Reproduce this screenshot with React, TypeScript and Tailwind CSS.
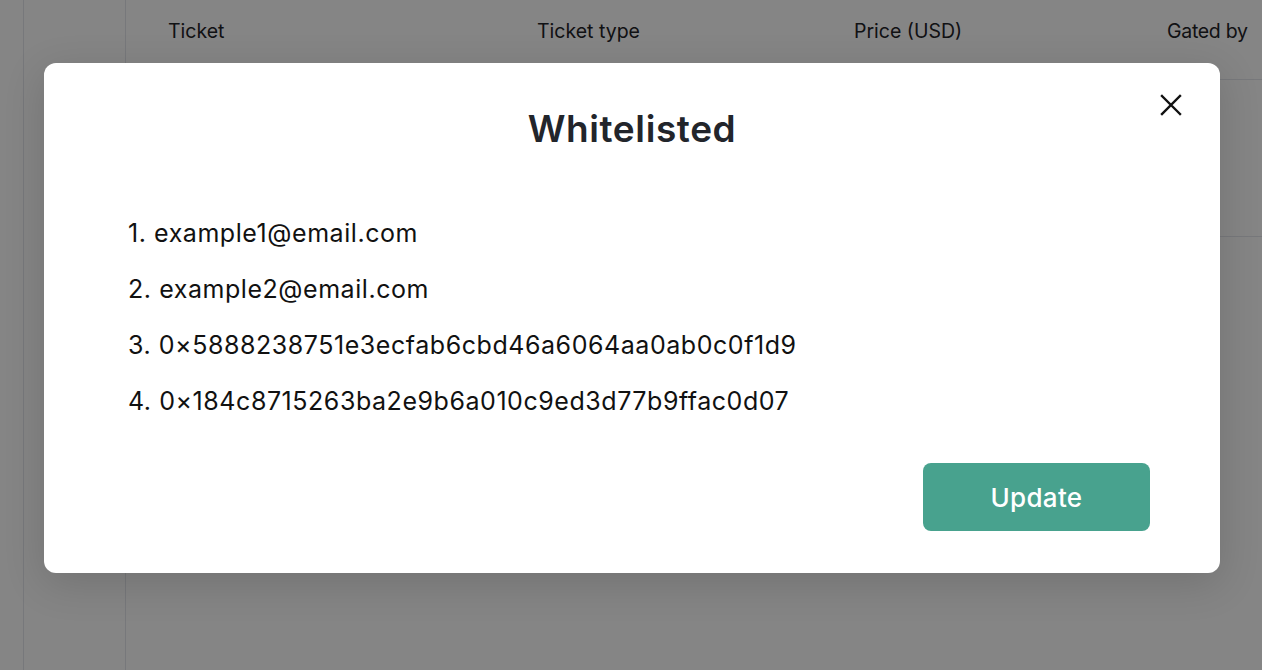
import React from "react";

const font = { fontFamily: "Inter, 'Noto Sans', sans-serif" };

export default function App() {
  const items = [
    "example1@email.com",
    "example2@email.com",
    "0×5888238751e3ecfab6cbd46a6064aa0ab0c0f1d9",
    "0×184c8715263ba2e9b6a010c9ed3d77b9ffac0d07",
  ];
  return (
    <div className="relative h-[670px] w-full overflow-hidden bg-white" style={font}>
      {/* background page */}
      <div className="flex h-full">
        <div className="w-[24px] shrink-0 border-r border-[#e5e7eb]" />
        <div className="w-[102px] shrink-0 border-r border-[#e5e7eb]" />
        <div className="min-w-0 flex-1">
          <div className="grid h-[80px] grid-cols-[369px_317px_313px_1fr] items-start border-b border-[#e5e7eb] pl-[42px] pt-[17px] text-[19.5px] text-[#1f2328]">
            <div>Ticket</div>
            <div>Ticket type</div>
            <div>Price (USD)</div>
            <div className="whitespace-nowrap tracking-[-0.3px]">Gated by</div>
          </div>
          <div className="h-[157px] border-b border-[#e5e7eb]" />
        </div>
      </div>

      {/* overlay */}
      <div className="absolute inset-0 bg-[rgba(0,0,0,0.48)] pl-[44px] pt-[63px]">
        <div className="flex h-[510px] w-[1176px] flex-col rounded-[12px] bg-white shadow-[0_10px_40px_rgba(0,0,0,0.15)]">
          <div className="grid grid-cols-[1fr_auto_1fr] items-start pl-[38px] pr-[38px] pt-[31px]">
            <div />
            <h2 className="mt-[11px] text-[37px] font-semibold leading-[48px] tracking-[0.6px] text-[#22252b]">
              Whitelisted
            </h2>
            <button className="justify-self-end">
              <svg width="22" height="22" viewBox="0 0 22 22" fill="none" stroke="#111" strokeWidth="2.4" strokeLinecap="square">
                <path d="M2 2 L20 20 M20 2 L2 20" />
              </svg>
            </button>
          </div>

          <ol className="mt-[64px] flex flex-col gap-[24px] pl-[84px] text-[25px] leading-[32px] tracking-[0.55px] text-[#111]">
            {items.map((t, i) => (
              <li key={i}>
                {i + 1}. {t}
              </li>
            ))}
          </ol>

          <div className="mt-auto flex justify-end pb-[42px] pr-[70px]">
            <button className="h-[68px] w-[227px] rounded-[8px] bg-[#48a28e] text-[26px] font-medium tracking-[0.3px] text-white">
              Update
            </button>
          </div>
        </div>
      </div>
    </div>
  );
}
